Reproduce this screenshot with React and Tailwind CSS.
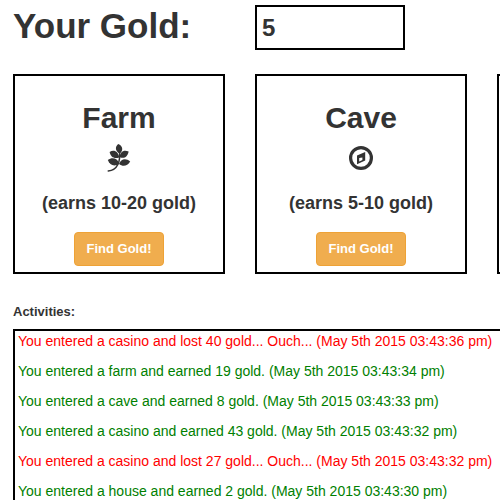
import React from 'react';

function LeafIcon() {
  return (
    <svg className="h-7 w-6" viewBox="0 0 24 28" fill="currentColor" aria-hidden="true">
      <path d="M11.200 0C7.600 3 8.200 7 12.800 9.800C16.600 6 15.800 2 11.200 0Z" />
      <path d="M2.600 8C7 5.200 11.400 7.600 12.200 13.400C7.200 15.200 3.600 13 2.600 8Z" />
      <path d="M21.600 7.500C20.600 13 17 15 12.800 13.200C12.800 7.800 16.800 5.200 21.600 7.500Z" />
      <path d="M0.800 16C5.200 12.800 10.200 14 12.400 19.700C7.400 23 2.800 21.400 0.800 16Z" />
      <path d="M23.200 17.500C20.200 22.400 15.600 22.800 12 19.900C13.800 14.800 18.800 13.600 23.200 17.500Z" />
      <path d="M12.400 7C13.700 17.500 10.500 26.300 1.200 27" fill="none" stroke="currentColor" strokeWidth="1.400" strokeLinecap="round" />
    </svg>
  );
}

function CompassIcon() {
  return (
    <svg className="h-7 w-6" viewBox="0 0 24 28" fill="currentColor" aria-hidden="true">
      <circle cx="12" cy="14" r="10.400" fill="none" stroke="currentColor" strokeWidth="3.200" />
      <path fillRule="evenodd" d="M8 11.600L16.200 8V16.600L8 20.200ZM10.200 14V17.400L13.400 16V13.600Z" />
    </svg>
  );
}

const places = [
  { name: 'Farm', range: '10-20', Icon: LeafIcon },
  { name: 'Cave', range: '5-10', Icon: CompassIcon },
];

const activities = [
  { lost: true, text: 'You entered a casino and lost 40 gold... Ouch... (May 5th 2015 03:43:36 pm)' },
  { text: 'You entered a farm and earned 19 gold. (May 5th 2015 03:43:34 pm)' },
  { text: 'You entered a cave and earned 8 gold. (May 5th 2015 03:43:33 pm)' },
  { text: 'You entered a casino and earned 43 gold. (May 5th 2015 03:43:32 pm)' },
  { lost: true, text: 'You entered a casino and lost 27 gold... Ouch... (May 5th 2015 03:43:32 pm)' },
  { text: 'You entered a house and earned 2 gold. (May 5th 2015 03:43:30 pm)' },
];

function Card({ children }) {
  return (
    <section className="flex h-[200px] w-[212px] shrink-0 flex-col items-center border-2 border-black pt-6">
      {children}
    </section>
  );
}

export default function App() {
  return (
    <main className="h-screen overflow-hidden bg-white pl-[13px] font-['Liberation_Sans',Arial,sans-serif] text-[#333333]">
      <div className="flex pt-[5px]">
        <h1 className="w-[242px] shrink-0 text-[35px] leading-[42px] font-bold">
          <label htmlFor="gold">Your Gold:</label>
        </h1>
        <input id="gold" readOnly defaultValue="5" className="h-[45px] w-[150px] border-2 border-black px-[5px] text-2xl font-bold outline-none" />
      </div>
      <div className="mt-6 flex gap-[30px]">
        {places.map(({ name, range, Icon }) => (
          <Card key={name}>
            <h2 className="text-[30px] leading-9 font-bold">{name}</h2>
            <div className="mt-2 flex justify-center"><Icon /></div>
            <h4 className="mt-5 text-lg leading-[22px] font-bold">(earns {range} gold)</h4>
            <button type="button" className="mt-[18px] rounded-sm border border-[#eea236] bg-[#f0ad4e] px-3 py-1.5 text-[13px] leading-5 font-bold text-white">
              Find Gold!
            </button>
          </Card>
        ))}
        <Card />
      </div>
      <h5 className="mt-7 text-[13px] leading-5 font-bold">Activities:</h5>
      <div className="mt-[7px] w-max min-w-full border-2 border-r-0 border-black px-[3px]">
        {activities.map(({ lost, text }) => (
          <p key={text} className={`mb-2.5 text-sm leading-5 whitespace-nowrap ${lost ? 'text-[#ff0000]' : 'text-[#008000]'}`}>{text}</p>
        ))}
      </div>
    </main>
  );
}
